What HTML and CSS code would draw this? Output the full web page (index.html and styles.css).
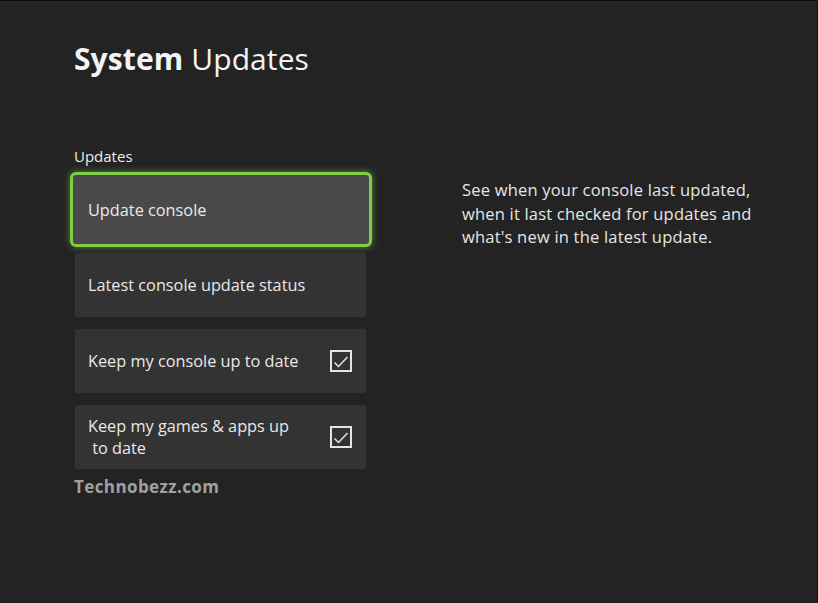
FILE: index.html
```html
<!DOCTYPE html>
<html lang="en">
<head>
  <meta charset="UTF-8" />
  <meta name="viewport" content="width=device-width, initial-scale=1.0"/>
  <title>System Updates</title>
  <link rel="stylesheet" href="styles.css">
</head>
<body>
  <div class="screen">
    <h1 class="page-title"><b>System</b> Updates</h1>
    <div class="main">
      <div class="menu">
        <p class="section-label">Updates</p>
        <div class="tile focused">Update console</div>
        <div class="tile">Latest console update status</div>
        <div class="tile check-tile">
          <span class="tile-text">Keep my console up to date</span>
          <svg class="checkbox" width="22" height="22" viewBox="0 0 22 22">
            <rect x="1" y="1" width="20" height="20" fill="none" stroke="#e4e4e4" stroke-width="2"/>
            <polyline points="4.5,12.5 8.5,16.5 17.5,7" fill="none" stroke="#e4e4e4" stroke-width="1.5"/>
          </svg>
        </div>
        <div class="tile check-tile">
          <span class="tile-text">Keep my games &amp; apps up<br>&nbsp;to date</span>
          <svg class="checkbox" width="22" height="22" viewBox="0 0 22 22">
            <rect x="1" y="1" width="20" height="20" fill="none" stroke="#e4e4e4" stroke-width="2"/>
            <polyline points="4.5,12.5 8.5,16.5 17.5,7" fill="none" stroke="#e4e4e4" stroke-width="1.5"/>
          </svg>
        </div>
        <div class="watermark">Technobezz.com</div>
      </div>
      <p class="description">See when your console last updated, when it last checked for updates and what's new in the latest update.</p>
    </div>
  </div>
</body>
</html>
```

FILE: styles.css
```css
:root {
  --bg: #232323;
  --tile: #333333;
  --tile-focus: #494949;
  --green: #7fcf45;
  --text: #e9e9e9;
}
body {
  margin: 0;
  background: var(--bg);
  font-family: "Open Sans", "Noto Sans", sans-serif;
  color: var(--text);
}
.screen {
  height: 602px;
  border-top: 1px solid #0c0c0c;
  border-right: 1px solid #141414;
  padding-left: 74px;
}
.page-title {
  margin: 36px 0 0;
  font-size: 30px;
  font-weight: 400;
  line-height: 44px;
  color: #f4f4f4;
  letter-spacing: 0.1px;
}
.page-title b {
  font-weight: 700;
}
.main {
  display: flex;
  margin-top: 65px;
}
.menu {
  width: 292px;
  display: flex;
  flex-direction: column;
}
.section-label {
  margin: 0 0 6px;
  font-size: 15px;
  line-height: 20px;
  color: #ededed;
}
.tile {
  height: 64px;
  margin-left: 1px;
  margin-bottom: 12px;
  padding-left: 13px;
  background: var(--tile);
  border-radius: 2px;
  display: flex;
  align-items: center;
  font-size: 16.3px;
}
.tile.focused {
  box-sizing: border-box;
  height: 75px;
  margin: 0 -6px 6px -4px;
  padding-left: 15px;
  background: var(--tile-focus);
  border: 3px solid var(--green);
  border-radius: 6px;
  box-shadow: 0 0 6px 1px rgba(127, 207, 69, 0.45);
}
.check-tile {
  justify-content: space-between;
  padding-right: 14px;
}
.tile-text {
  line-height: 22px;
}
.checkbox {
  flex: none;
}
.watermark {
  margin-top: -6px;
  font-size: 17px;
  font-weight: 700;
  color: #a0a0a0;
  letter-spacing: 0.4px;
}
.description {
  width: 310px;
  margin: 32px 0 0 96px;
  font-size: 16.5px;
  line-height: 23.5px;
  color: #e6e6e6;
  letter-spacing: 0.2px;
}
```
